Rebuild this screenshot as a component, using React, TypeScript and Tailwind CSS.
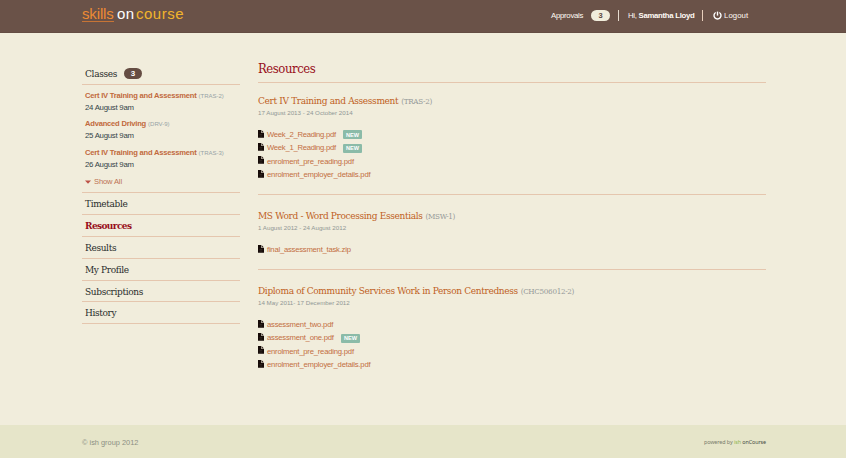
import React from "react";

const slab = "font-['DejaVu_Serif_Condensed','DejaVu_Serif',serif] [font-stretch:condensed]";

function FileIcon() {
  return (
    <svg width="6" height="8" viewBox="0 0 6 8" className="relative -top-[1px] mr-[3px] shrink-0">
      <path d="M0 0h3.3v2.9H6V7.8H0z" fill="#160b08" />
      <path d="M3.8.2 5.9 2.4H3.8z" fill="#2a1c16" />
      <path d="M1.5 4.6h2.8M1.5 6.1h2.8" stroke="#49403a" strokeWidth=".5" />
    </svg>
  );
}

function PowerIcon() {
  return (
    <svg width="9" height="9" viewBox="0 0 9 9" className="mr-[2px]">
      <path d="M2.7 1.5a3.5 3.5 0 1 0 3.6 0" fill="none" stroke="#fff" strokeWidth="1.4" />
      <path d="M4.5 .6v4" stroke="#fff" strokeWidth="1.4" />
    </svg>
  );
}

type FileItem = { name: string; width: string; isNew?: boolean };
type Course = { title: string; code: string; dates: string; files: FileItem[]; box: string };

const courses: Course[] = [
  {
    title: "Cert IV Training and Assessment",
    code: "(TRAS-2)",
    dates: "17 August 2013 - 24 October 2014",
    box: "h-[112px] pt-[11px]",
    files: [
      { name: "Week_2_Reading.pdf", width: "w-[76px] tracking-[-0.28px]", isNew: true },
      { name: "Week_1_Reading.pdf", width: "w-[76px] tracking-[-0.28px]", isNew: true },
      { name: "enrolment_pre_reading.pdf", width: "tracking-[-0.22px]" },
      { name: "enrolment_employer_details.pdf", width: "tracking-[-0.2px]" },
    ],
  },
  {
    title: "MS Word - Word Processing Essentials",
    code: "(MSW-1)",
    dates: "1 August 2012 - 24 August 2012",
    box: "h-[75px] pt-[14px]",
    files: [{ name: "final_assessment_task.zip", width: "tracking-[-0.24px]" }],
  },
  {
    title: "Diploma of Community Services Work in Person Centredness",
    code: "(CHC506012-2)",
    dates: "14 May 2011- 17 December 2012",
    box: "h-[120px] pt-[14px]",
    files: [
      { name: "assessment_two.pdf", width: "tracking-[-0.22px]" },
      { name: "assessment_one.pdf", width: "w-[74px] tracking-[-0.24px]", isNew: true },
      { name: "enrolment_pre_reading.pdf", width: "tracking-[-0.22px]" },
      { name: "enrolment_employer_details.pdf", width: "tracking-[-0.2px]" },
    ],
  },
];

const classes = [
  { name: "Cert IV Training and Assessment", code: "(TRAS-2)", date: "24 August 9am" },
  { name: "Advanced Driving", code: "(DRV-9)", date: "25 August 9am" },
  { name: "Cert IV Training and Assessment", code: "(TRAS-3)", date: "26 August 9am" },
];

const menu = [
  { name: "Timetable" },
  { name: "Resources", active: true },
  { name: "Results" },
  { name: "My Profile" },
  { name: "Subscriptions" },
  { name: "History" },
];

export default function App() {
  return (
    <div className="flex h-[458px] w-[846px] flex-col overflow-hidden bg-[#f1eddc] font-['Liberation_Sans',Arial,sans-serif] whitespace-nowrap">
      <header className="flex h-[33px] shrink-0 items-start justify-between border-b border-[#644d43] bg-[#6a5248] pl-[82px] pr-[96px]">
        <div className="flex pt-[6px] text-[15px] leading-[16px]">
          <span className="h-[16px] w-[32px] border-b border-[#c77435] tracking-[-0.15px] text-[#ed8b34]">skills</span>
          <span className="ml-[3px] w-[18px] tracking-[0.4px] text-white">on</span>
          <span className="ml-[1px] w-[50px] tracking-[0.5px] text-[#f2b52c]">course</span>
        </div>
        <div className="flex h-[31px] items-center text-[7.8px] text-[#fffaf4]">
          <span className="w-[40px] tracking-[-0.28px]">Approvals</span>
          <span className="flex h-[11px] w-[19px] items-center justify-center rounded-full bg-[#f1eddc] text-[7.5px] font-bold text-[#59463d]">3</span>
          <span className="ml-[8px] h-[11px] w-px bg-[#e6dbcf]" />
          <span className="ml-[9px] w-[67px] tracking-[-0.3px]">Hi, <b>Samantha Lloyd</b></span>
          <span className="ml-[7px] mr-[10px] h-[11px] w-px bg-[#e8cfbc]" />
          <PowerIcon />
          <span className="w-[26px] tracking-[0.05px]">Logout</span>
        </div>
      </header>

      <main className="flex h-[392px] shrink-0 pl-[82px] pt-[30px]">
        <aside className="w-[158px]">
          <div className="flex h-[22px] items-center border-b border-[#e5c6ae] pl-[3px]">
            <h2 className={`${slab} w-[39px] text-[10px] tracking-[-0.3px] text-[#292c2b]`}>Classes</h2>
            <span className="flex h-[11px] w-[18px] items-center justify-center rounded-full bg-[#654d43] text-[8px] font-bold text-white">3</span>
          </div>
          <div className="h-[108px] border-b border-[#e5c6ae] pl-[3px] pt-[5px]">
            {classes.map((item) => (
              <div key={item.code} className="h-[28.4px] text-[7.8px] leading-[12px]">
                <p className="flex text-[#97a3a6]">
                  <b className="mr-[2px] text-[7.6px] tracking-[-0.22px] text-[#c16a3c]">{item.name}</b>
                  <span className="text-[6px]">{item.code}</span>
                </p>
                <p className="tracking-[-0.25px] text-[#344448]">{item.date}</p>
              </div>
            ))}
            <p className="flex items-center text-[7.6px] leading-[13px] tracking-[-0.15px] text-[#bd7353]">
              <svg width="6" height="4" viewBox="0 0 6 4" className="mr-[3px]"><path d="M0 .5h6L3 3.8z" fill="#bd5246" /></svg>
              Show All
            </p>
          </div>
          <nav>
            {menu.map((item) => (
              <a key={item.name} className={`${slab} flex h-[21.9px] items-center border-b border-[#e5c6ae] pl-[3px] text-[10px] ${item.active ? "font-bold tracking-[-0.6px] text-[#980f1b]" : "tracking-[-0.35px] text-[#292c2b]"}`}>
                {item.name}
              </a>
            ))}
          </nav>
        </aside>

        <section className="ml-[18px] w-[508px]">
          <h1 className={`${slab} h-[20px] border-b border-[#e5c6ae] text-[13px] leading-[12px] tracking-[-0.45px] text-[#980f1b]`}>Resources</h1>
          {courses.map((course, index) => (
            <article key={course.code} className={`${course.box} ${index < 2 ? "border-b border-[#e5c6ae]" : ""}`}>
              <h2 className={`${slab} h-[14px] text-[10px] leading-[13px] text-[#c0611e]`}>
                <span className="tracking-[-0.34px]">{course.title}</span>{" "}
                <span className="text-[8px] tracking-[-0.3px] text-[#969a99]">{course.code}</span>
              </h2>
              <p className="h-[20px] text-[6.2px] leading-[9px] text-[#909795]">{course.dates}</p>
              {course.files.map((file) => (
                <div key={file.name} className="flex h-[13.4px] items-center text-[7.7px] text-[#c36d42]">
                  <FileIcon />
                  <span className={file.width}>{file.name}</span>
                  {file.isNew && <span className="flex h-[9px] w-[19px] items-center justify-center rounded-[1px] bg-[#8bbba8] pt-px text-[5.6px] font-bold text-white">NEW</span>}
                </div>
              ))}
            </article>
          ))}
        </section>
      </main>

      <footer className="flex h-[33px] shrink-0 items-center justify-between bg-[#e6e5c9] pl-[82px] pr-[80px] pt-[2px] text-[7.4px] text-[#8c9083]">
        <span>© ish group 2012</span>
        <span className="font-['Noto_Sans',sans-serif] text-[5.4px] tracking-[-0.09px] text-[#777a69]">powered by <span className="text-[#91b650]">ish</span> <span className="text-[#454b42]">onCourse</span></span>
      </footer>
    </div>
  );
}
